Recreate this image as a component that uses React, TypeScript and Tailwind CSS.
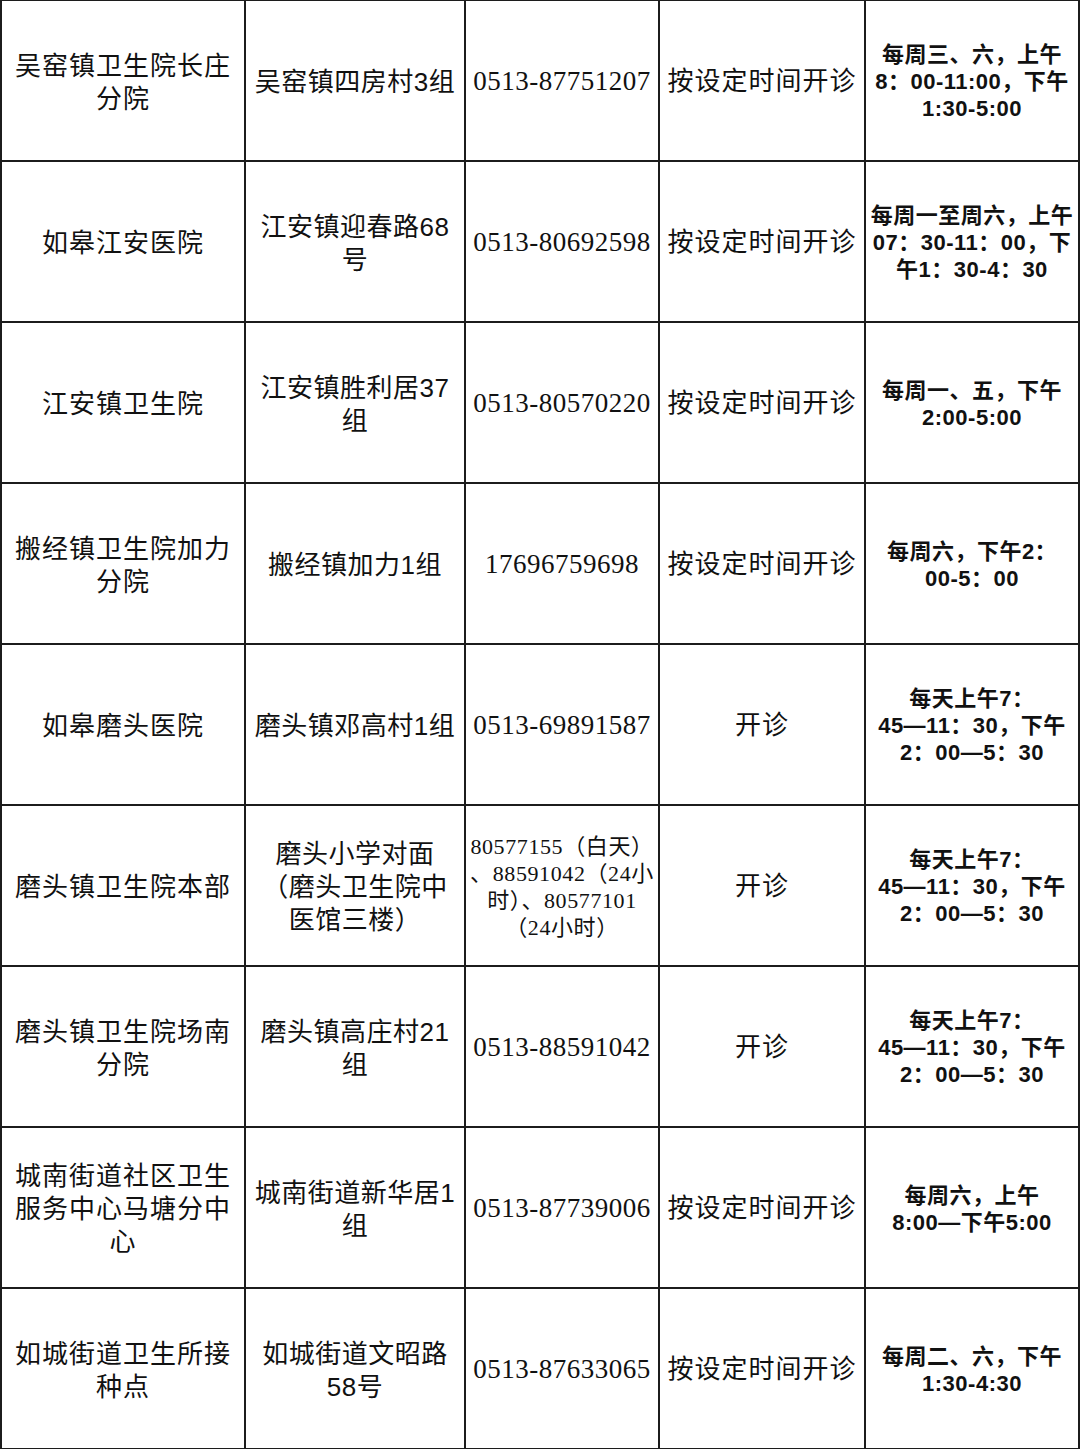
import React from 'react';

type Row = {
  name: string[];
  addr: string[];
  phone: string[];
  status: string;
  hours: string[];
};

const moutouHours = ['每天上午7：', '45—11：30，下午', '2：00—5：30'];

const rows: Row[] = [
  {
    name: ['吴窑镇卫生院长庄', '分院'],
    addr: ['吴窑镇四房村3组'],
    phone: ['0513-87751207'],
    status: '按设定时间开诊',
    hours: ['每周三、六，上午', '8：00-11:00，下午', '1:30-5:00'],
  },
  {
    name: ['如皋江安医院'],
    addr: ['江安镇迎春路68', '号'],
    phone: ['0513-80692598'],
    status: '按设定时间开诊',
    hours: ['每周一至周六，上午', '07：30-11：00，下', '午1：30-4：30'],
  },
  {
    name: ['江安镇卫生院'],
    addr: ['江安镇胜利居37', '组'],
    phone: ['0513-80570220'],
    status: '按设定时间开诊',
    hours: ['每周一、五，下午', '2:00-5:00'],
  },
  {
    name: ['搬经镇卫生院加力', '分院'],
    addr: ['搬经镇加力1组'],
    phone: ['17696759698'],
    status: '按设定时间开诊',
    hours: ['每周六，下午2：', '00-5：00'],
  },
  {
    name: ['如皋磨头医院'],
    addr: ['磨头镇邓高村1组'],
    phone: ['0513-69891587'],
    status: '开诊',
    hours: moutouHours,
  },
  {
    name: ['磨头镇卫生院本部'],
    addr: ['磨头小学对面', '（磨头卫生院中', '医馆三楼）'],
    phone: ['80577155（白天）', '、88591042（24小', '时）、80577101', '（24小时）'],
    status: '开诊',
    hours: moutouHours,
  },
  {
    name: ['磨头镇卫生院场南', '分院'],
    addr: ['磨头镇高庄村21', '组'],
    phone: ['0513-88591042'],
    status: '开诊',
    hours: moutouHours,
  },
  {
    name: ['城南街道社区卫生', '服务中心马塘分中', '心'],
    addr: ['城南街道新华居1', '组'],
    phone: ['0513-87739006'],
    status: '按设定时间开诊',
    hours: ['每周六，上午', '8:00—下午5:00'],
  },
  {
    name: ['如城街道卫生所接', '种点'],
    addr: ['如城街道文昭路', '58号'],
    phone: ['0513-87633065'],
    status: '按设定时间开诊',
    hours: ['每周二、六，下午', '1:30-4:30'],
  },
];

const sans = "font-['Liberation_Sans','Noto_Sans_CJK_SC',sans-serif]";
const serif = "font-['Liberation_Serif','Noto_Sans_CJK_SC',serif]";

const Lines: React.FC<{ lines: string[] }> = ({ lines }) => (
  <>
    {lines.map((l, i) => (
      <div key={i} className="whitespace-nowrap">
        {l}
      </div>
    ))}
  </>
);

export default function App() {
  return (
    <div className="w-[1080px] h-[1449px] bg-white text-[#111]">
      <div className="grid grid-cols-[246px_220px_194px_206px_214px] grid-rows-[repeat(9,161px)] border-t border-[#1c1c1c]">
        {rows.map((r, i) => (
          <React.Fragment key={i}>
            <div className="flex flex-col items-center justify-center border-l-2 border-r-2 border-b-2 border-[#1c1c1c] pt-[4px] text-center">
              <div className={`${sans} text-[26px] leading-[33px] tracking-[1px]`}>
                <Lines lines={r.name} />
              </div>
            </div>
            <div className="flex flex-col items-center justify-center border-r-2 border-b-2 border-[#1c1c1c] pt-[4px] text-center">
              <div className={`${sans} text-[26px] leading-[33px] tracking-[0.5px]`}>
                <Lines lines={r.addr} />
              </div>
            </div>
            <div className="flex flex-col items-center justify-center border-r-2 border-b-2 border-[#1c1c1c] pt-[2px] text-center">
              {r.phone.length > 1 ? (
                <div className={`${serif} text-[22px] leading-[27px] tracking-[0.6px]`}>
                  <Lines lines={r.phone} />
                </div>
              ) : (
                <div className={`${serif} text-[27px] leading-[33px] tracking-[0.5px]`}>
                  <Lines lines={r.phone} />
                </div>
              )}
            </div>
            <div className="flex flex-col items-center justify-center border-r-2 border-b-2 border-[#1c1c1c] pt-[2px] text-center">
              <div className={`${sans} text-[26px] leading-[33px] tracking-[1px]`}>{r.status}</div>
            </div>
            <div className="flex flex-col items-center justify-center border-r-2 border-b-2 border-[#1c1c1c] pt-[2px] text-center">
              <div className={`${sans} text-[22px] font-bold leading-[27px] tracking-[0.5px]`}>
                <Lines lines={r.hours} />
              </div>
            </div>
          </React.Fragment>
        ))}
      </div>
    </div>
  );
}
